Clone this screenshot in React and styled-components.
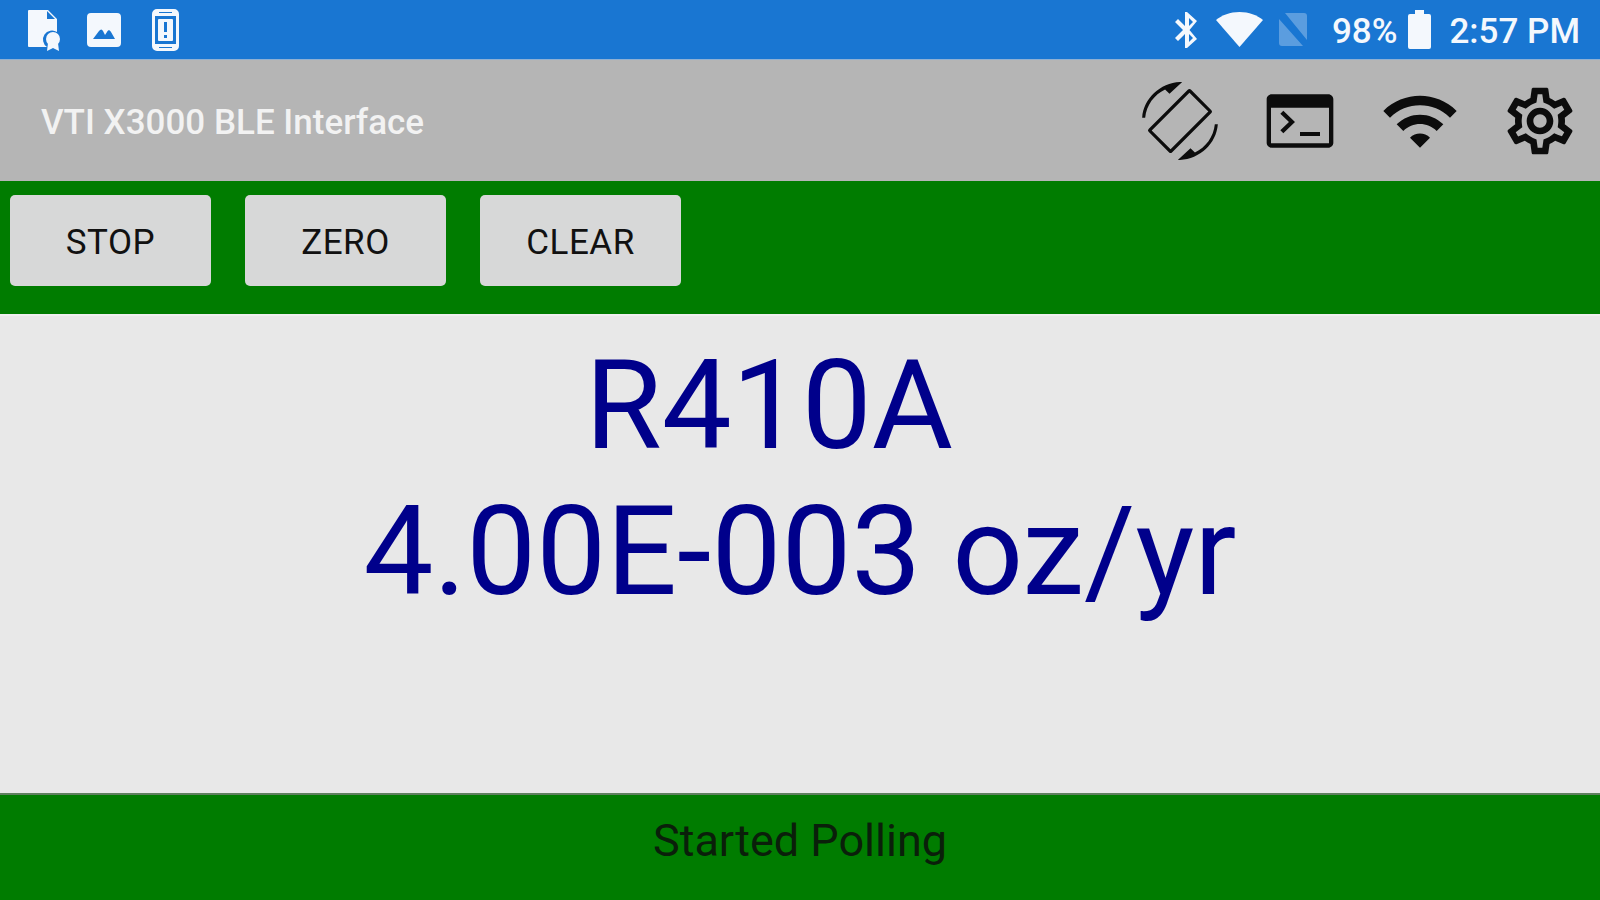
import styled, { createGlobalStyle } from 'styled-components';

const GlobalStyle = createGlobalStyle`
  html, body {
    margin: 0;
    padding: 0;
    height: 100%;
    overflow: hidden;
    font-family: Roboto, "Liberation Sans", sans-serif;
  }
  #root {
    height: 100%;
  }
`;

const Screen = styled.div`
  width: 1600px;
  height: 900px;
  display: flex;
  flex-direction: column;
`;

const StatusBar = styled.div`
  height: 59px;
  flex: none;
  display: flex;
  align-items: center;
  justify-content: space-between;
  padding: 0 20px 0 26px;
  background: #1976d2;
  color: #f4f8fd;
  box-sizing: border-box;
`;

const StatusGroup = styled.div`
  display: flex;
  align-items: center;
`;

const StatusIcon = styled.svg`
  width: ${props => props.$w}px;
  height: ${props => props.$h}px;
  margin-right: ${props => props.$gap || 0}px;
  fill: #f4f8fd;
  opacity: ${props => props.$dim ? 0.3 : 1};
  flex: none;
`;

const StatusText = styled.span`
  font-size: 35px;
  font-weight: 500;
  padding-top: 4px;
  margin-right: ${props => props.$gap || 0}px;
  white-space: nowrap;
`;

const ActionBar = styled.div`
  height: 122px;
  flex: none;
  display: flex;
  align-items: center;
  justify-content: space-between;
  background: #b5b5b5;
  border-top: 1px solid #8fb0d3;
  box-sizing: border-box;
`;

const Title = styled.div`
  margin-left: 41px;
  padding-top: 4px;
  font-size: 35px;
  color: #f2f2f2;
  font-weight: 500;
`;

const ActionIcons = styled.div`
  display: flex;
`;

const ActionCell = styled.div`
  width: 120px;
  height: 120px;
  display: flex;
  align-items: center;
  justify-content: center;
`;

const ActionIcon = styled.svg`
  width: 80px;
  height: 80px;
  fill: #0c0c0c;
`;

const ButtonRow = styled.div`
  height: 133px;
  flex: none;
  display: flex;
  gap: 34px;
  padding: 14px 10px 0;
  box-sizing: border-box;
  background: #007c00;
`;

const ActionButton = styled.button`
  width: 201px;
  height: 91px;
  border: none;
  border-radius: 5px;
  background: #d7d8d8;
  color: #111;
  font-family: Roboto, "Liberation Sans", sans-serif;
  font-size: 35px;
  letter-spacing: 0.5px;
  font-weight: 400;
  padding: 3px 0 0;
`;

const Reading = styled.div`
  flex: 1;
  display: flex;
  flex-direction: column;
  align-items: center;
  padding-top: 16px;
  background: #e8e8e8;
  border-top: 2px solid #f0f0f0;
  border-bottom: 2px solid #5f7f5f;
  box-sizing: border-box;
`;

const ReadingLine = styled.div`
  font-size: 124.5px;
  line-height: 146px;
  color: #00008b;
  white-space: nowrap;
  padding-right: ${props => props.$shift || 0}px;
`;

const StatusFooter = styled.div`
  height: 105px;
  flex: none;
  display: flex;
  justify-content: center;
  padding-top: 19px;
  box-sizing: border-box;
  background: #007c00;
  color: #0a1f0a;
  font-size: 45px;
  line-height: 54px;
`;

const App = () => {
  return (
    <Screen>
      <GlobalStyle />
      <StatusBar>
        <StatusGroup>
          <StatusIcon $w={36} $h={42} $gap={25} viewBox="0 0 36 42">
            <path d="M3 1h19l9 9v13a9 9 0 0 0-10 15H3a1 1 0 0 1-1-1V2a1 1 0 0 1 1-1z" />
            <path d="M21 2v8h8z" fill="#1976d2" />
            <circle cx="27" cy="30" r="7" />
            <path d="M22 34l-1 8 6-3 6 3-1-8z" />
          </StatusIcon>
          <StatusIcon $w={34} $h={34} $gap={31} viewBox="0 0 34 34">
            <path d="M4 0h26a4 4 0 0 1 4 4v26a4 4 0 0 1-4 4H4a4 4 0 0 1-4-4V4a4 4 0 0 1 4-4zM6 26h22l-4-7c-1.500-2.500-3-2-4 0l-2 3-2-4c-1-2-2.500-2-4 0z" fillRule="evenodd" />
          </StatusIcon>
          <StatusIcon $w={27} $h={42} viewBox="0 0 27 42">
            <path d="M5 0h17a5 5 0 0 1 5 5v32a5 5 0 0 1-5 5H5a5 5 0 0 1-5-5V5a5 5 0 0 1 5-5zM3 7v28h21V7zM7 3v1h13V3zM7 38v1h13v-1z" fillRule="evenodd" />
            <rect x="6" y="10" width="15" height="22" rx="1" />
            <rect x="12" y="13" width="3" height="10" fill="#1976d2" />
            <rect x="12" y="26" width="3" height="3" fill="#1976d2" />
          </StatusIcon>
        </StatusGroup>
        <StatusGroup>
          <StatusIcon $w={24} $h={36} $gap={18} viewBox="0 0 24 36">
            <path d="M11 0h2l10 9-7.500 9 7.500 9-10 9h-2V22l-7 7-3-3 8-8-8-8 3-3 7 7zM15 6v8l4-4zM15 22v8l4-4z" fillRule="evenodd" />
          </StatusIcon>
          <StatusIcon $w={47} $h={35} $gap={14} viewBox="0 0 47 35">
            <path d="M23.500 0C14 0 6 3 0 8l23.500 27L47 8C41 3 33 0 23.500 0z" />
          </StatusIcon>
          <StatusIcon $w={31} $h={33} $gap={24} $dim viewBox="0 0 31 33">
            <path d="M8 0h19a3 3 0 0 1 3 3v24zM2 6l24 27H5a3 3 0 0 1-3-3z" />
          </StatusIcon>
          <StatusText $gap={11}>98%</StatusText>
          <StatusIcon $w={23} $h={39} $gap={18} viewBox="0 0 23 39">
            <path d="M7 0h9v4h5a2 2 0 0 1 2 2v31a2 2 0 0 1-2 2H2a2 2 0 0 1-2-2V6a2 2 0 0 1 2-2h5z" />
          </StatusIcon>
          <StatusText>2:57 PM</StatusText>
        </StatusGroup>
      </StatusBar>
      <ActionBar>
        <Title>VTI X3000 BLE Interface</Title>
        <ActionIcons>
          <ActionCell>
            <ActionIcon viewBox="0 0 24 24">
              <g transform="matrix(-1 0 0 1 24 0)">
                <path d="M16.480 2.520c3.270 1.550 5.610 4.720 5.970 8.480h.9C22.900 5.200 18 .6 12 .3l-.66.03 3.810 3.510 1.330-1.320zM7.520 21.480C4.250 19.940 1.910 16.760 1.550 13h-.9C1.100 18.800 6 23.400 12 23.700l.66-.03-3.810-3.510-1.330 1.320z" />
                <path d="M9.170 2.400a.6.600 0 0 0-.42.18L2.580 8.750a.6.600 0 0 0 0 .84l11.830 11.830a.6.600 0 0 0 .84 0l6.170-6.170a.6.600 0 0 0 0-.84L9.590 2.580a.6.600 0 0 0-.42-.18zM3.500 9.170L9.170 3.500l11.330 11.330-5.670 5.670z" fillRule="evenodd" />
              </g>
            </ActionIcon>
          </ActionCell>
          <ActionCell>
            <ActionIcon viewBox="0 0 24 24">
              <path d="M20.500 4h-17C2.700 4 2 4.700 2 5.500v13c0 .8.700 1.500 1.500 1.500h17c.8 0 1.500-.7 1.500-1.500v-13c0-.8-.7-1.500-1.500-1.500zm.2 14.700H3.300V8h17.400v10.700z" fillRule="evenodd" />
              <path d="M18 16.500h-6V15.300h6zM7 15.700l-.9-.9 2.600-2.500-2.600-2.500.9-.9 3.500 3.400z" />
            </ActionIcon>
          </ActionCell>
          <ActionCell>
            <ActionIcon viewBox="0 0 24 24">
              <path d="M1 9l2 2c4.970-4.970 13.030-4.970 18 0l2-2C16.930 2.930 7.080 2.930 1 9zm8 8l3 3 3-3c-1.650-1.660-4.340-1.660-6 0zm-4-4l2 2c2.760-2.760 7.240-2.760 10 0l2-2C15.140 9.140 8.870 9.140 5 13z" />
            </ActionIcon>
          </ActionCell>
          <ActionCell>
            <ActionIcon viewBox="0 0 24 24">
              <path d="M19.430 12.980c.04-.32.07-.64.07-.98s-.03-.66-.07-.98l2.110-1.650c.19-.15.24-.42.12-.64l-2-3.460c-.12-.22-.39-.3-.61-.22l-2.490 1c-.52-.4-1.080-.73-1.690-.98l-.38-2.650C14.460 2.180 14.250 2 14 2h-4c-.25 0-.46.18-.49.42l-.38 2.650c-.61.25-1.170.59-1.690.98l-2.490-1c-.23-.09-.49 0-.61.22l-2 3.460c-.13.22-.07.49.12.64l2.110 1.650c-.04.32-.07.65-.07.98s.03.66.07.98l-2.110 1.650c-.19.15-.24.42-.12.64l2 3.460c.12.22.39.3.61.22l2.490-1c.52.4 1.080.73 1.690.98l.38 2.650c.03.24.24.42.49.42h4c.25 0 .46-.18.49-.42l.38-2.650c.61-.25 1.170-.59 1.690-.98l2.490 1c.23.09.49 0 .61-.22l2-3.460c.12-.22.07-.49-.12-.64l-2.110-1.650zM17.450 11.270c.04.31.05.52.05.73 0 .21-.02.43-.05.73l-.14 1.130.89.7 1.080.84-.7 1.210-1.270-.51-1.040-.42-.9.68c-.43.32-.84.56-1.250.73l-1.060.43-.16 1.130-.2 1.350h-1.400l-.19-1.350-.16-1.130-1.060-.43c-.43-.18-.83-.41-1.230-.71l-.91-.7-1.060.43-1.270.51-.7-1.210 1.080-.84.89-.7-.14-1.130c-.03-.31-.05-.54-.05-.74s.02-.43.05-.73l.14-1.130-.89-.7-1.080-.84.7-1.210 1.270.51 1.040.42.9-.68c.43-.32.84-.56 1.250-.73l1.060-.43.16-1.130.2-1.350h1.390l.19 1.350.16 1.130 1.060.43c.43.18.83.41 1.230.71l.91.7 1.060-.43 1.270-.51.7 1.210-1.070.85-.89.7.14 1.130zM12 8c-2.210 0-4 1.790-4 4s1.790 4 4 4 4-1.790 4-4-1.790-4-4-4zm0 6c-1.100 0-2-.9-2-2s.9-2 2-2 2 .9 2 2-.9 2-2 2z" />
            </ActionIcon>
          </ActionCell>
        </ActionIcons>
      </ActionBar>
      <ButtonRow>
        <ActionButton>STOP</ActionButton>
        <ActionButton>ZERO</ActionButton>
        <ActionButton>CLEAR</ActionButton>
      </ButtonRow>
      <Reading>
        <ReadingLine $shift={62}>R410A</ReadingLine>
        <ReadingLine>4.00E-003 oz/yr</ReadingLine>
      </Reading>
      <StatusFooter>Started Polling</StatusFooter>
    </Screen>
  );
};

export default App;
